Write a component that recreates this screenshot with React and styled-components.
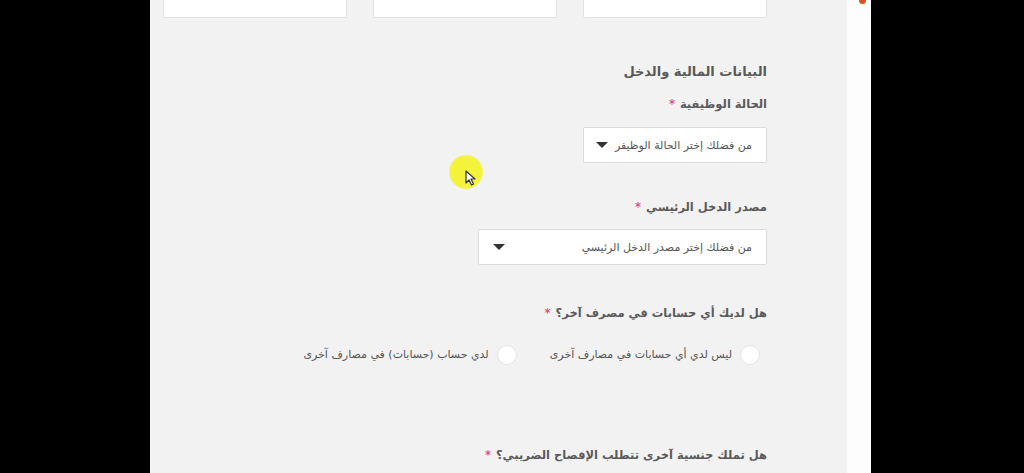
import React from "react";
import styled, { createGlobalStyle } from "styled-components";

const Global = createGlobalStyle`
  html, body { margin: 0; padding: 0; background: #000; overflow: hidden; }
  body { font-family: "DejaVu Sans", "Noto Sans", sans-serif; }
`;

const Screen = styled.div`
  position: relative;
  display: flex;
  width: 1024px;
  height: 473px;
  background: #000;
  overflow: hidden;
`;

const LeftBar = styled.div`
  width: 150px;
  flex: none;
  background: #000;
`;

const Panel = styled.div`
  width: 697px;
  flex: none;
  background: #f2f2f2;
  padding: 0 80px 0 13px;
  box-sizing: border-box;
  direction: rtl;
  overflow: hidden;
`;

const SideStrip = styled.div`
  width: 24px;
  flex: none;
  background: #fdfdfd;
  position: relative;
`;

const TopRow = styled.div`
  display: grid;
  grid-template-columns: repeat(3, 184px);
  gap: 26px;
  margin-top: -19px;
`;

const TopInput = styled.div`
  height: 37px;
  background: #fff;
  border: 1px solid #e2e2e2;
  border-radius: 2px;
  box-sizing: border-box;
`;

const SectionTitle = styled.h3`
  margin: 44px 0 0;
  font-size: 13px;
  line-height: 20px;
  font-weight: bold;
  color: #5a5a5a;
`;

const Label = styled.div`
  margin-top: ${(p) => p.$mt}px;
  font-size: 11.5px;
  line-height: 20px;
  font-weight: bold;
  color: #5a5a5a;
`;

const Star = styled.span`
  color: #e0557a;
  margin-right: 5px;
  font-weight: bold;
`;

const Select = styled.div`
  margin-top: ${(p) => p.$mt}px;
  width: ${(p) => p.$w}px;
  height: 36px;
  box-sizing: border-box;
  background: #fff;
  border: 1px solid #dcdcdc;
  border-radius: 2px;
  display: flex;
  align-items: center;
  justify-content: space-between;
  padding: 0 ${(p) => p.$pr}px 0 ${(p) => p.$pl}px;
  font-size: 11px;
  color: #555;
`;

const Caret = styled.span`
  width: 0;
  height: 0;
  border-left: 6px solid transparent;
  border-right: 6px solid transparent;
  border-top: 6px solid #333;
`;

const RadioGroup = styled.div`
  margin-top: 22px;
  display: flex;
  gap: 33px;
  padding-right: 7px;
  align-items: center;
`;

const RadioOption = styled.label`
  display: flex;
  align-items: center;
  gap: 8px;
  font-size: 11px;
  color: #555;
  line-height: 20px;
`;

const RadioCircle = styled.span`
  width: 20px;
  height: 20px;
  border-radius: 50%;
  background: #fff;
  border: 1px solid #e4e4e4;
  box-sizing: border-box;
  flex: none;
`;

const Highlight = styled.div`
  position: absolute;
  left: 449px;
  top: 155px;
  width: 34px;
  height: 34px;
  border-radius: 50%;
  background: radial-gradient(circle, #f3f33a 60%, rgba(243, 243, 58, 0.6) 80%, rgba(243, 243, 58, 0) 100%);
`;

const Cursor = styled.svg`
  position: absolute;
  left: 465px;
  top: 170px;
`;

const OrangeDot = styled.div`
  position: absolute;
  left: 12px;
  top: -3px;
  width: 7px;
  height: 7px;
  border-radius: 50%;
  background: #d9531e;
`;

export default function App() {
  return (
    <>
      <Global />
      <Screen>
        <LeftBar />
        <Panel>
          <TopRow>
            <TopInput />
            <TopInput />
            <TopInput />
          </TopRow>
          <SectionTitle>البيانات المالية والدخل</SectionTitle>
          <Label $mt={12}>
            الحالة الوظيفية<Star>*</Star>
          </Label>
          <Select $mt={13} $w={184} $pr={14} $pl={12}>
            <span>من فضلك إختر الحالة الوظيفر</span>
            <Caret />
          </Select>
          <Label $mt={34}>
            مصدر الدخل الرئيسي<Star>*</Star>
          </Label>
          <Select $mt={12} $w={289} $pr={14} $pl={14}>
            <span>من فضلك إختر مصدر الدخل الرئيسي</span>
            <Caret />
          </Select>
          <Label $mt={38}>
            هل لديك أي حسابات في مصرف آخر؟<Star>*</Star>
          </Label>
          <RadioGroup>
            <RadioOption>
              <RadioCircle />
              ليس لدي أي حسابات في مصارف آخرى
            </RadioOption>
            <RadioOption>
              <RadioCircle />
              لدي حساب (حسابات) في مصارف آخرى
            </RadioOption>
          </RadioGroup>
          <Label $mt={80}>
            هل تملك جنسية آخرى تتطلب الإفصاح الضريبي؟<Star>*</Star>
          </Label>
        </Panel>
        <SideStrip>
          <OrangeDot />
        </SideStrip>
        <Highlight />
        <Cursor width="12" height="16" viewBox="0 0 12 16">
          <path d="M1 1 L1 13 L4 10 L6.5 15 L8.5 14 L6 9 L10 9 Z" fill="#fff" stroke="#333" strokeWidth="1.2" strokeLinejoin="round" />
        </Cursor>
      </Screen>
    </>
  );
}
